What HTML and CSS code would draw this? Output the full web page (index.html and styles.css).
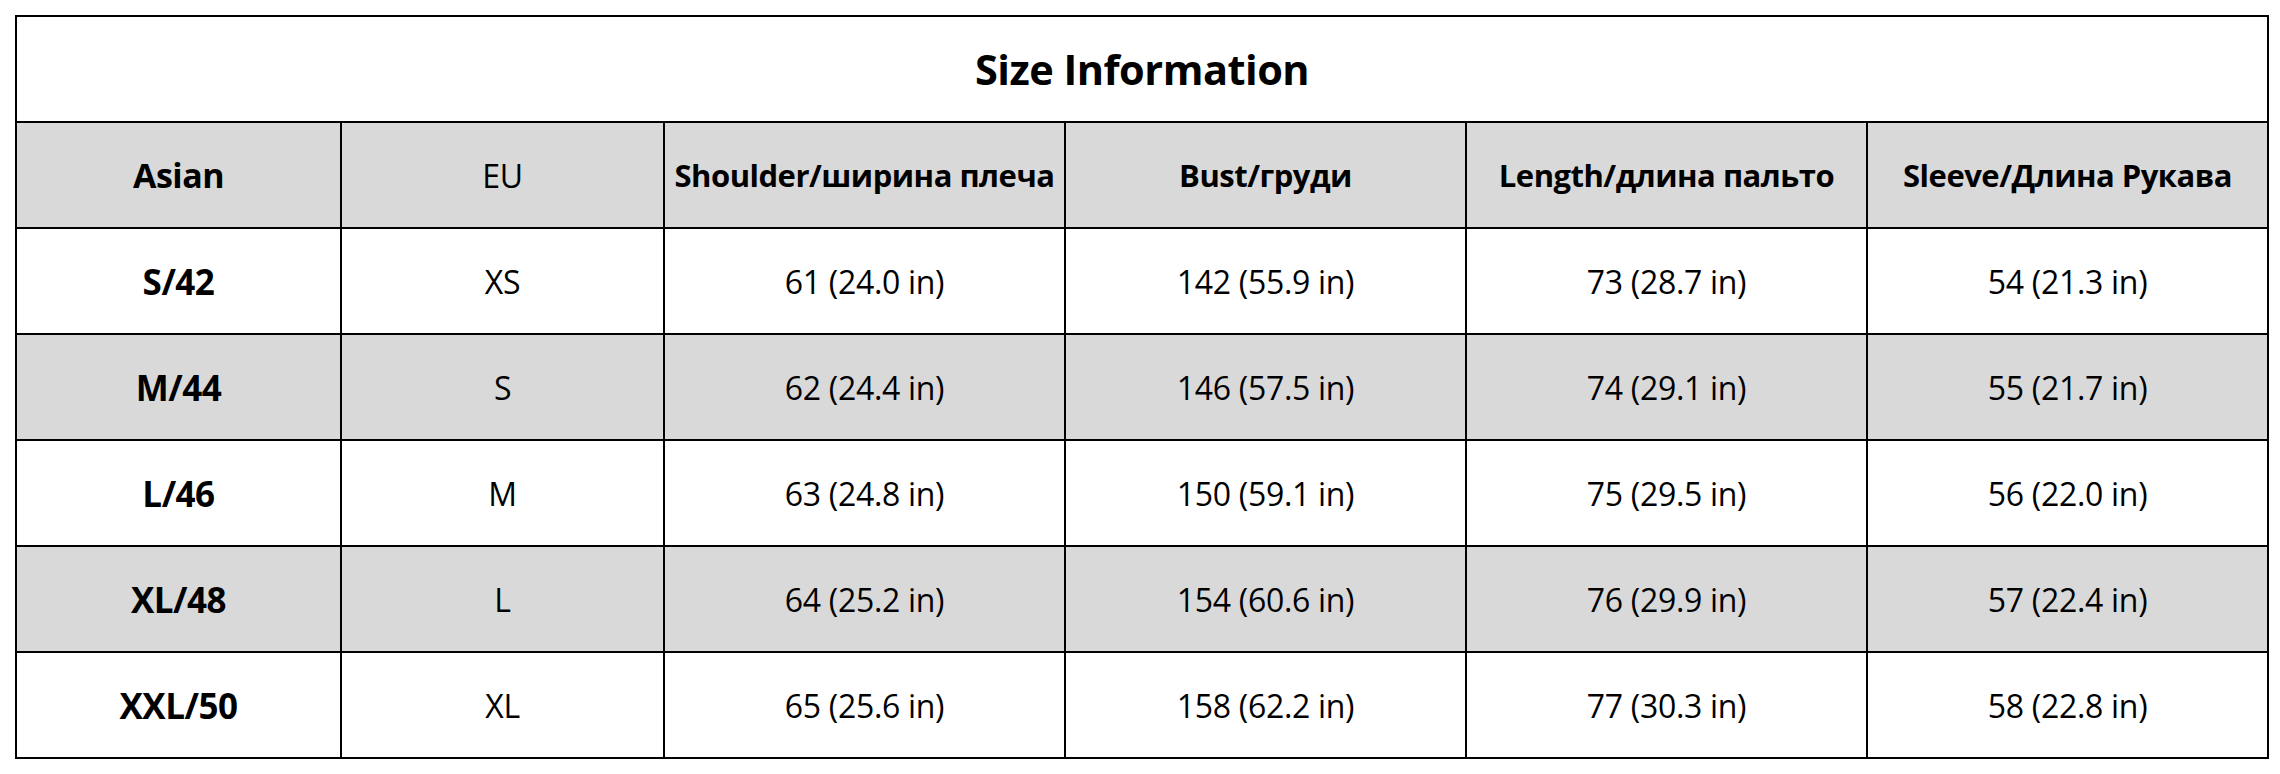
FILE: index.html
```html
<!DOCTYPE html>
<html>
<head>
<meta charset="utf-8">
<link rel="stylesheet" href="styles.css">
</head>
<body>
<table class="size-table">
  <colgroup>
    <col class="c-narrow"><col class="c-narrow2"><col class="c-wide"><col class="c-wide"><col class="c-wide"><col class="c-wide">
  </colgroup>
  <tr class="title-row"><th colspan="6" class="title">Size Information</th></tr>
  <tr class="shade">
    <th class="lead">Asian</th><td>EU</td><th>Shoulder/ширина плеча</th><th>Bust/груди</th><th>Length/длина пальто</th><th>Sleeve/Длина Рукава</th>
  </tr>
  <tr>
    <th class="big">S/42</th><td>XS</td><td>61 (24.0 in)</td><td>142 (55.9 in)</td><td>73 (28.7 in)</td><td>54 (21.3 in)</td>
  </tr>
  <tr class="shade">
    <th class="big">M/44</th><td>S</td><td>62 (24.4 in)</td><td>146 (57.5 in)</td><td>74 (29.1 in)</td><td>55 (21.7 in)</td>
  </tr>
  <tr>
    <th class="big">L/46</th><td>M</td><td>63 (24.8 in)</td><td>150 (59.1 in)</td><td>75 (29.5 in)</td><td>56 (22.0 in)</td>
  </tr>
  <tr class="shade">
    <th class="big">XL/48</th><td>L</td><td>64 (25.2 in)</td><td>154 (60.6 in)</td><td>76 (29.9 in)</td><td>57 (22.4 in)</td>
  </tr>
  <tr>
    <th class="big">XXL/50</th><td>XL</td><td>65 (25.6 in)</td><td>158 (62.2 in)</td><td>77 (30.3 in)</td><td>58 (22.8 in)</td>
  </tr>
</table>
</body>
</html>
```
FILE: styles.css
```css
html, body {
  margin: 0;
  padding: 0;
  background: #ffffff;
}
body {
  padding: 15px 0 0 15px;
  font-family: "Open Sans", "Noto Sans", "DejaVu Sans", sans-serif;
  color: #000;
}
.size-table {
  border-collapse: collapse;
  table-layout: fixed;
  width: 2251px;
  border: 2px solid #000;
}
.c-narrow { width: 325px; }
.c-narrow2 { width: 323px; }
.c-wide { width: 401px; }
.size-table th,
.size-table td {
  border: 2px solid #000;
  height: 104px;
  padding: 0;
  text-align: center;
  vertical-align: middle;
  font-size: 32px;
  font-weight: 400;
  white-space: nowrap;
  letter-spacing: -0.3px;
}
.size-table th {
  font-weight: 700;
  font-size: 31px;
  letter-spacing: -0.5px;
}
.size-table th.lead {
  font-size: 34px;
}
.size-table th.big {
  font-size: 35px;
}
.size-table th.title {
  font-size: 41.5px;
  height: 104px;
  background: #fff;
}
.shade th,
.shade td {
  background: #d9d9d9;
}
```
